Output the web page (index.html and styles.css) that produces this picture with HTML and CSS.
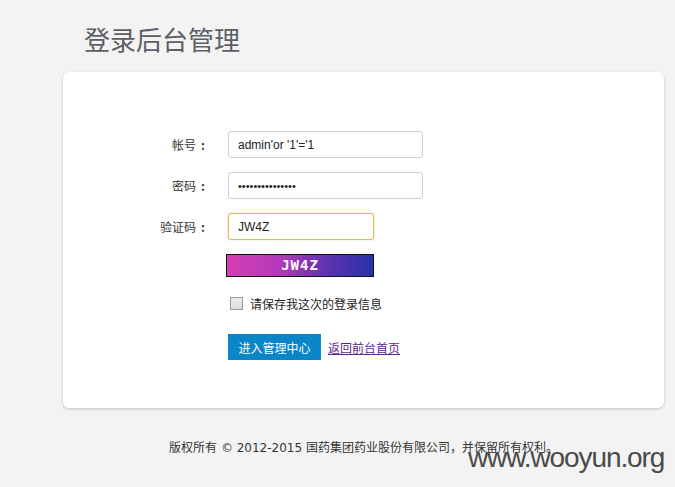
FILE: index.html
```html
<!DOCTYPE html>
<html lang="zh-CN">
<head>
<meta charset="utf-8">
<title>登录后台管理</title>
<link rel="stylesheet" href="styles.css">
</head>
<body>
<div class="page">
  <h1 class="title">登录后台管理</h1>
  <div class="card">
    <form class="form">
      <label class="label">帐号<span class="colon">:</span></label>
      <div class="field"><input class="input" type="text" value="admin'or '1'='1"></div>
      <label class="label">密码<span class="colon">:</span></label>
      <div class="field"><input class="input input-pass" type="password" value="aaaaaaaaaaaaaaa"></div>
      <label class="label">验证码<span class="colon">:</span></label>
      <div class="field"><input class="input input-code" type="text" value="JW4Z"></div>
      <div></div>
      <div class="field captcha-row"><div class="captcha">JW4Z</div></div>
      <div></div>
      <div class="field remember"><span class="checkbox"></span><span>请保存我这次的登录信息</span></div>
      <div></div>
      <div class="field actions"><button type="button" class="btn">进入管理中心</button><a class="back" href="#">返回前台首页</a></div>
    </form>
  </div>
  <div class="footer">版权所有 © 2012-2015 国药集团药业股份有限公司，并保留所有权利。</div>
</div>
<div class="watermark">www.wooyun.org</div>
</body>
</html>
```

FILE: styles.css
```css
html, body {
  margin: 0;
  padding: 0;
  background: #f3f3f3;
  font-family: "Noto Sans CJK SC", "Liberation Sans", sans-serif;
  color: #333;
}
.page {
  width: 601px;
  margin-left: 63px;
  padding-top: 22px;
}
.title {
  margin: 0 0 0 21px;
  font-size: 26px;
  line-height: 34px;
  font-weight: normal;
  color: #5c5f66;
  height: 50px;
}
.card {
  background: #fff;
  border-radius: 6px;
  box-shadow: 0 1px 3px rgba(0,0,0,0.2);
  height: 336px;
  box-sizing: border-box;
  padding-top: 59px;
}
.form {
  display: grid;
  grid-template-columns: 147px 1fr;
  column-gap: 18px;
  align-items: center;
}
.label {
  text-align: right;
  font-size: 12px;
  color: #333;
  height: 27px;
  line-height: 27px;
  margin-bottom: 14px;
}
.colon {
  display: inline-block;
  width: 14px;
  text-align: center;
  font-weight: bold;
}
.field {
  margin-bottom: 14px;
  display: flex;
  align-items: center;
}
.input {
  box-sizing: border-box;
  width: 195px;
  height: 27px;
  border: 1px solid #cfcfcf;
  border-radius: 3px;
  padding: 0 9px;
  font-family: "Liberation Sans", sans-serif;
  font-size: 12px;
  color: #222;
  background: #fff;
  outline: none;
}
.input-pass {
  font-size: 11px;
}
.input-code {
  width: 146px;
  border-color: #e8b45e;
  box-shadow: 0 0 2px rgba(232,180,94,0.6);
}
.captcha-row {
  margin-left: -2px;
  margin-bottom: 18px;
}
.captcha {
  box-sizing: border-box;
  width: 148px;
  height: 23px;
  border: 1px solid #111;
  background: linear-gradient(90deg, #d63eb3 0%, #b63ab8 35%, #5a32b0 70%, #2732a8 100%);
  color: #fff;
  font-family: "DejaVu Sans Mono", monospace;
  font-weight: bold;
  font-size: 14px;
  line-height: 21px;
  text-align: center;
  letter-spacing: 1px;
}
.remember {
  font-size: 12px;
  color: #222;
  margin-bottom: 22px;
  margin-left: 2px;
}
.checkbox {
  box-sizing: border-box;
  width: 13px;
  height: 13px;
  border: 1px solid #999;
  background: linear-gradient(#ececec, #dcdcdc);
  margin-right: 7px;
}
.actions {
  margin-bottom: 0;
  gap: 7px;
}
.btn {
  box-sizing: border-box;
  width: 93px;
  height: 26px;
  border: 0;
  background: #0a86c8;
  color: #fff;
  font-family: "Noto Sans CJK SC", sans-serif;
  font-size: 12px;
  padding: 0;
}
.back {
  font-size: 12px;
  color: #5b2a8c;
  text-decoration: underline;
}
.footer {
  margin-top: 30px;
  text-align: center;
  font-family: "DejaVu Sans", "Noto Sans CJK SC", sans-serif;
  font-size: 12px;
  color: #333;
}
.watermark {
  position: absolute;
  left: 468px;
  top: 442px;
  font-family: "Liberation Sans", sans-serif;
  font-size: 28px;
  letter-spacing: -1.1px;
  color: #4a4a4a;
}
```
